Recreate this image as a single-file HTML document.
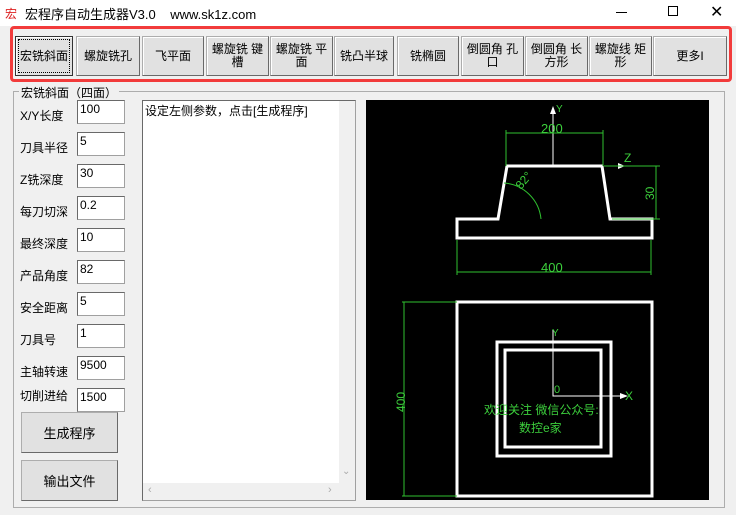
<!DOCTYPE html>
<html><head><meta charset="utf-8"><style>
*{margin:0;padding:0;box-sizing:border-box}
body{width:736px;height:515px;background:#f0f0f0;font-family:"Liberation Sans","Noto Sans CJK SC",sans-serif;font-size:12px;color:#000;position:relative;overflow:hidden}
.a{position:absolute}
.title{left:0;top:0;width:736px;height:26px;background:#fff}
.btn{position:absolute;top:36px;height:40px;background:#e1e1e1;border:1px solid #adadad;border-right-color:#696969;border-bottom-color:#696969;box-shadow:inset 1px 1px 0 #fff;display:flex;align-items:center;justify-content:center;text-align:center;line-height:13px;font-size:12px}
.lbl{position:absolute;left:20px;font-size:12px}
.inp{position:absolute;left:77px;width:48px;height:24px;background:#fff;border:1px solid #a0a0a0;border-left-color:#696969;border-top-color:#696969;padding:1px 2px;font-size:12px}
.b2{position:absolute;left:21px;width:97px;height:41px;background:#e1e1e1;border:1px solid #adadad;border-right-color:#696969;border-bottom-color:#696969;display:flex;align-items:center;justify-content:center;font-size:13px}
</style></head><body>
<div class="a title"></div>
<div class="a" style="left:5px;top:5px;color:#d22;font-size:12px">宏</div>
<div class="a" style="left:25px;top:4px;font-size:13px">宏程序自动生成器V3.0&nbsp;&nbsp;&nbsp; www.sk1z.com</div>
<div class="a" style="left:616px;top:12px;width:11px;height:1px;background:#000"></div>
<div class="a" style="left:668px;top:6px;width:10px;height:10px;border:1px solid #000"></div>
<div class="a" style="left:710px;top:2px;font-size:16px">✕</div>
<div class="a" style="left:10px;top:26px;width:722px;height:56px;border:3px solid #f23b3b;border-radius:4px"></div>
<div class="btn" style="left:15px;width:58px;outline:1px dotted #000;outline-offset:-4px;border:1px solid #333">宏铣斜面</div>
<div class="btn" style="left:76px;width:64px">螺旋铣孔</div>
<div class="btn" style="left:142px;width:62px">飞平面</div>
<div class="btn" style="left:206px;width:63px">螺旋铣 键<br>槽</div>
<div class="btn" style="left:270px;width:63px">螺旋铣 平<br>面</div>
<div class="btn" style="left:334px;width:60px">铣凸半球</div>
<div class="btn" style="left:397px;width:62px">铣椭圆</div>
<div class="btn" style="left:461px;width:63px">倒圆角 孔<br>口</div>
<div class="btn" style="left:525px;width:63px">倒圆角 长<br>方形</div>
<div class="btn" style="left:589px;width:63px">螺旋线 矩<br>形</div>
<div class="btn" style="left:653px;width:74px">更多Ι</div>

<div class="a" style="left:13px;top:91px;width:712px;height:417px;border:1px solid #adadad"></div>
<div class="a" style="left:19px;top:84px;background:#f0f0f0;padding:0 2px;font-size:12px">宏铣斜面（四面）</div>

<div class="lbl" style="top:107px">X/Y长度</div><div class="inp" style="top:100px">100</div>
<div class="lbl" style="top:139px">刀具半径</div><div class="inp" style="top:132px">5</div>
<div class="lbl" style="top:171px">Z铣深度</div><div class="inp" style="top:164px">30</div>
<div class="lbl" style="top:203px">每刀切深</div><div class="inp" style="top:196px">0.2</div>
<div class="lbl" style="top:235px">最终深度</div><div class="inp" style="top:228px">10</div>
<div class="lbl" style="top:267px">产品角度</div><div class="inp" style="top:260px">82</div>
<div class="lbl" style="top:299px">安全距离</div><div class="inp" style="top:292px">5</div>
<div class="lbl" style="top:331px">刀具号</div><div class="inp" style="top:324px">1</div>
<div class="lbl" style="top:363px">主轴转速</div><div class="inp" style="top:356px">9500</div>
<div class="lbl" style="top:387px">切削进给</div><div class="inp" style="top:388px">1500</div>
<div class="b2" style="top:412px">生成程序</div>
<div class="b2" style="top:460px">输出文件</div>

<div class="a" style="left:142px;top:100px;width:214px;height:401px;background:#fff;border:1px solid #a0a0a0;border-left-color:#696969;border-top-color:#696969;padding:1px 2px;font-size:12px">设定左侧参数，点击[生成程序]</div>
<div class="a" style="left:339px;top:101px;width:16px;height:382px;background:#f0f0f0"></div>
<div class="a" style="left:143px;top:483px;width:212px;height:17px;background:#f0f0f0"></div>
<div class="a" style="left:342px;top:466px;color:#aaa;font-size:10px">⌄</div>
<div class="a" style="left:148px;top:484px;color:#aaa;font-size:11px">‹</div>
<div class="a" style="left:328px;top:484px;color:#aaa;font-size:11px">›</div>

<svg class="a" style="left:366px;top:100px" width="343" height="400" viewBox="366 100 343 400">
<rect x="366" y="100" width="343" height="400" fill="#000"/>
<g stroke="#fff" stroke-width="3" fill="none">
<path d="M507 166 L602 166 L610 219 L652 219 L652 238 L457 238 L457 219 L498 219 Z"/>
<rect x="457" y="302" width="195" height="194"/>
<rect x="497" y="342" width="114" height="114"/>
<rect x="505" y="350" width="96" height="97"/>
</g>
<g stroke="#fff" stroke-width="1" fill="none"><path d="M553 166 V112 M553 330 V396 H622"/></g>
<path d="M550 114 L553 106 L556 114 Z M620 393 L628 396 L620 399 Z M618 163 L625 166 L618 169Z" fill="#fff"/>
<g stroke="#2fbf2f" stroke-width="1" fill="none">
<path d="M506 166 V130 M603 166 V130 M506 133 H603 M457 240 V275 M651 240 V275 M457 272 H651 M604 166 H660 M612 219 H660 M656 166 V219 M402 302 H457 M402 496 H457 M404 302 V496"/>
<path d="M504 183 A 40 40 0 0 1 541 219"/>
</g>
<g fill="#3ccf3c" font-family="Liberation Sans,Noto Sans CJK SC,sans-serif" font-size="13">
<text x="541" y="133">200</text><text x="541" y="272">400</text>
<text x="624" y="162" font-size="12">Z</text><text x="556" y="112" font-size="10">Y</text>
<text x="552" y="336" font-size="10">Y</text><text x="554" y="393" font-size="11">0</text><text x="625" y="400" font-size="12">X</text>
<text transform="translate(654 200) rotate(-90)" font-size="12">30</text>
<text transform="translate(405 412) rotate(-90)" font-size="12">400</text>
<text transform="translate(521 190) rotate(-50)" font-size="12">82°</text>
<text x="484" y="414" font-size="12">欢迎关注 微信公众号:</text>
<text x="519" y="432" font-size="12">数控e家</text>
</g>
</svg>
</body></html>
